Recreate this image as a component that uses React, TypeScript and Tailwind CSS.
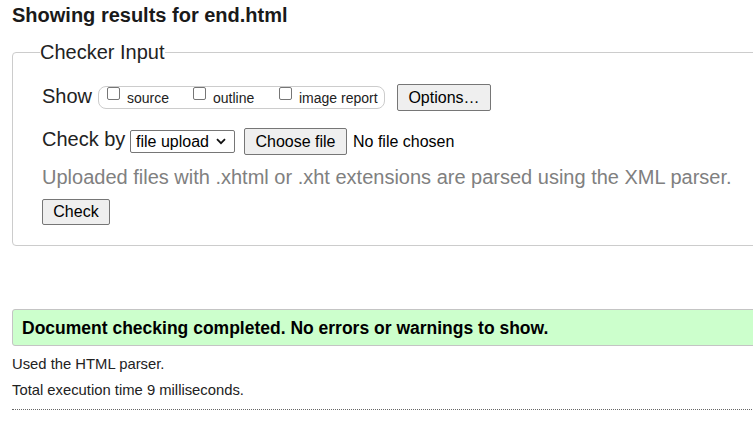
import React from "react";

function Box() {
  return <span className="block w-[13px] h-[13px] border border-[#767676] rounded-[2px] bg-white shrink-0" />;
}

export default function App() {
  return (
    <div className="w-[753px] h-[425px] overflow-hidden bg-white font-['Liberation_Sans',Arial,sans-serif] text-[#222]">
      <div className="w-[820px] pl-[12px]">
        <h2 className="pt-[4px] text-[20px] leading-[23px] font-bold text-[#1a1a1a]">
          Showing results for end.html
        </h2>
        <fieldset className="mt-[14px] border border-[#ccc] rounded-[4px] pl-[27px] pt-[20px] pb-[20px]">
          <legend className="text-[20px] leading-[23px] text-[#222]">Checker Input</legend>
          <div className="pl-[2px]">
            <div className="flex items-start h-[27px]">
              <span className="w-[56px] mt-[1px] text-[20px] leading-[23px]">Show</span>
              <div className="w-[287px] h-[23px] mt-[2px] border border-[#ccc] rounded-[8px] pl-[8px] flex items-start text-[14px] leading-[16px] text-[#222]">
                <label className="w-[86px] flex items-start">
                  <Box />
                  <span className="ml-[7px] mt-[3px]">source</span>
                </label>
                <label className="w-[86px] flex items-start">
                  <Box />
                  <span className="ml-[7px] mt-[3px]">outline</span>
                </label>
                <label className="flex items-start">
                  <Box />
                  <span className="ml-[7px] mt-[3px]">image report</span>
                </label>
              </div>
              <button className="ml-[12px] w-[94px] h-[27px] flex items-center justify-center border border-[#767676] rounded-[2px] bg-[#efefef] text-[16px] leading-[18px] text-black">
                Options…
              </button>
            </div>
            <div className="mt-[17px] flex items-start h-[27px]">
              <span className="w-[88px] text-[20px] leading-[23px]">Check by</span>
              <div className="mt-[2px] w-[105px] h-[23px] border border-[#767676] rounded-[2px] bg-white flex items-center pl-[5px] pr-[8px] text-[16px] leading-[18px] text-black">
                <span className="flex-1">file upload</span>
                <svg width="10" height="7" viewBox="0 0 10 7" className="shrink-0">
                  <path d="M1 1.2 L5 5.2 L9 1.2" fill="none" stroke="#111" strokeWidth="1.8" />
                </svg>
              </div>
              <button className="ml-[9px] w-[103px] h-[27px] flex items-center justify-center border border-[#767676] rounded-[2px] bg-[#efefef] text-[16px] leading-[18px] text-black">
                Choose file
              </button>
              <span className="ml-[6px] text-[16px] leading-[27px] text-black">No file chosen</span>
            </div>
            <p className="mt-[11px] text-[20px] leading-[23px] text-[#808080]">
              Uploaded files with .xhtml or .xht extensions are parsed using the XML parser.
            </p>
            <button className="mt-[10px] w-[68px] h-[26px] flex items-center justify-center border border-[#767676] rounded-[2px] bg-[#efefef] text-[16px] leading-[18px] text-black">
              Check
            </button>
          </div>
        </fieldset>
        <div className="mt-[63px] h-[37px] border border-[#c4c4c4] bg-[#ccffcc] rounded-l-[3px] pl-[9px] flex items-center font-bold text-[17.5px] leading-[20px] text-black">
          Document checking completed. No errors or warnings to show.
        </div>
        <p className="mt-[10px] text-[14.8px] leading-[17px] text-[#222]">Used the HTML parser.</p>
        <p className="mt-[9px] text-[14.8px] leading-[17px] text-[#222]">Total execution time 9 milliseconds.</p>
        <div className="mt-[10px] border-t border-dotted border-[#666]" />
      </div>
    </div>
  );
}
